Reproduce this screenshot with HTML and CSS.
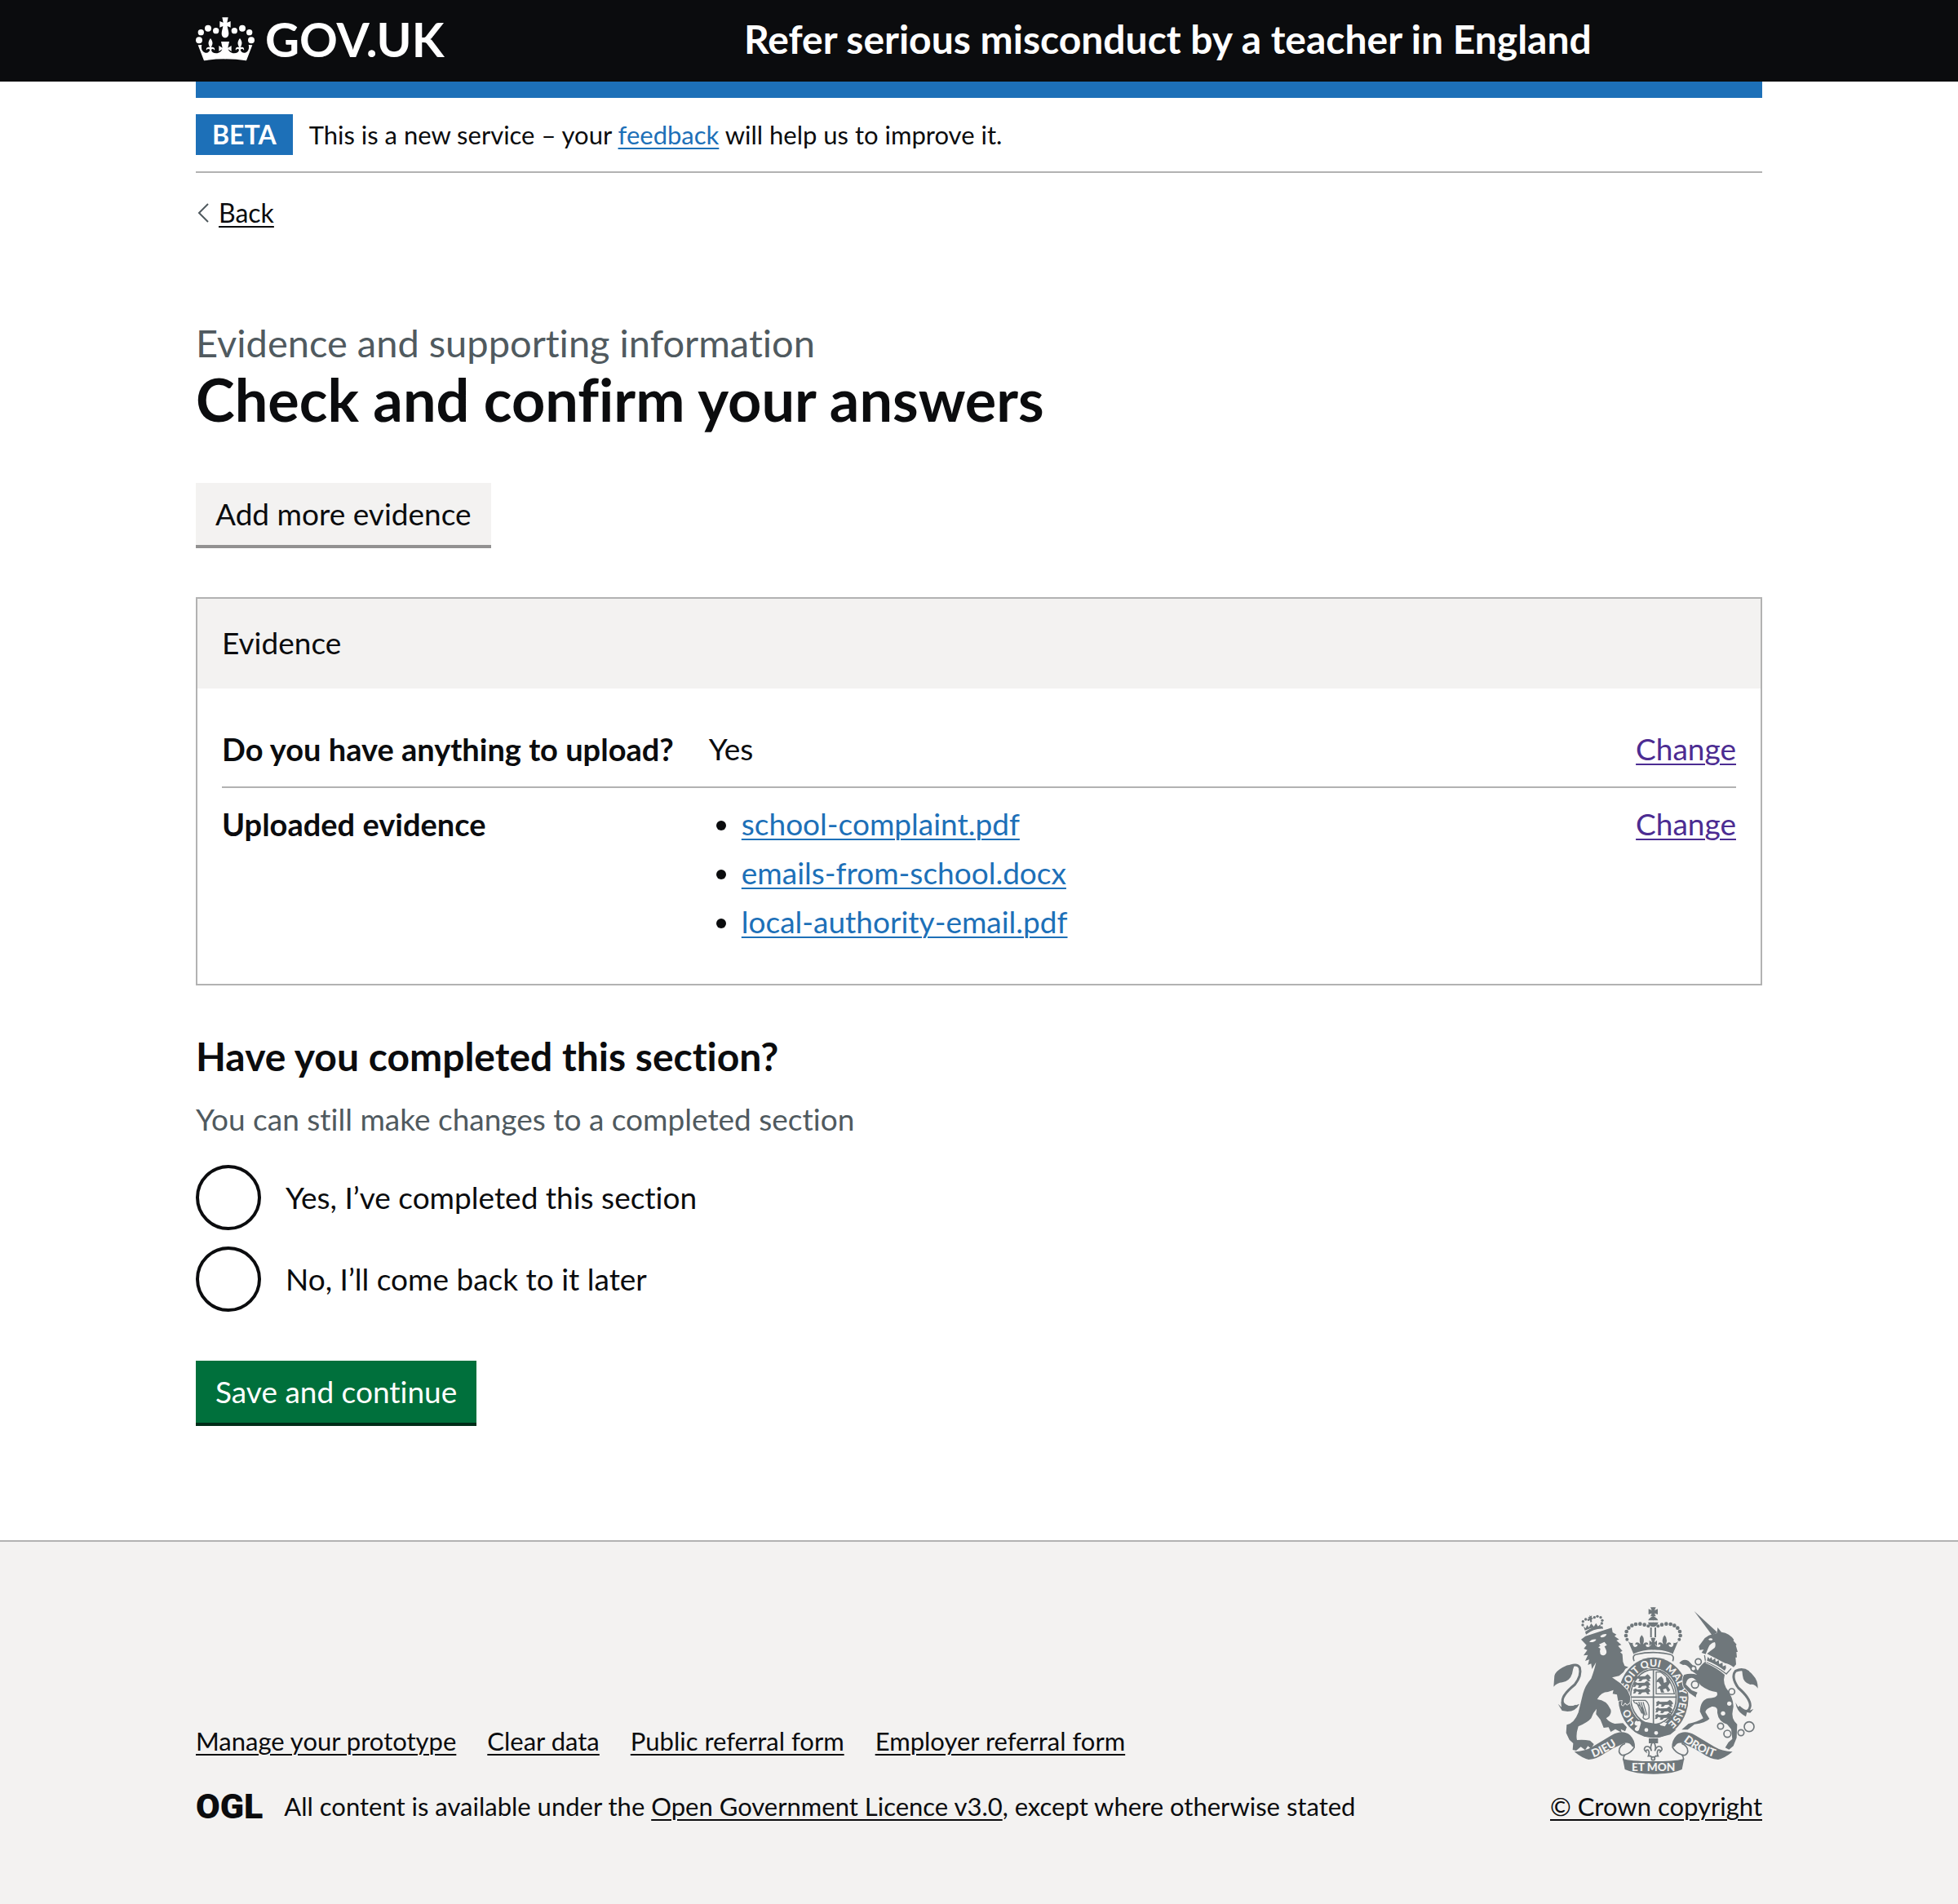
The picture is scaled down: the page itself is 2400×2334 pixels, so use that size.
FILE: index.html
```html
<!DOCTYPE html>
<html lang="en">
<head>
<meta charset="utf-8">
<meta name="viewport" content="width=device-width, initial-scale=1">
<title>Check and confirm your answers – Refer serious misconduct by a teacher in England</title>
<link rel="stylesheet" href="styles.css">
</head>
<body>
<header class="header">
  <div class="container header-inner">
    <a class="logo" href="#">
      <svg class="logo-crown" viewBox="60 62 216 162" aria-hidden="true">
        <defs>
          <g id="crown-half">
            <circle cx="72" cy="147" r="12"/><circle cx="79" cy="118" r="11"/><circle cx="105" cy="103" r="12"/><circle cx="134" cy="112" r="11"/>
            <path d="M168 63h-11l4 19-13-5v23l12-5c-1 10-5 17-5 27 0 10 6 16 13 16z"/>
            <path d="M90 222 68 165l14-1c-4 15 2 26 13 29 9 1 15-3 17-11-5-5-10-3-13 2-3-9 5-14 13-11-8-12-7-22 2-33 9 11 10 21 2 33 8-3 16 2 13 11-3-5-9-7-12-2 1 9 8 13 18 13 12 0 19-7 22-15l-12 8v-21l13 8-5-23h17v64q-44 0-78 6z"/>
          </g>
        </defs>
        <use href="#crown-half"/>
        <use href="#crown-half" transform="translate(336) scale(-1 1)"/>
      </svg>
      <span>GOV.UK</span>
    </a>
    <a class="service-name" href="#">Refer serious misconduct by a teacher in England</a>
  </div>
</header>

<div class="container">
  <div class="phase-banner">
    <strong class="tag">BETA</strong>
    <span>This is a new service – your <a class="link" href="#">feedback</a> will help us to improve it.</span>
  </div>
  <a class="back-link" href="#">
    <svg class="back-chevron" viewBox="0 0 14 24" aria-hidden="true"><path d="M13 1 2 12l11 11"/></svg>
    <span>Back</span>
  </a>

  <main class="main">
    <span class="caption">Evidence and supporting information</span>
    <h1 class="title">Check and confirm your answers</h1>
    <button class="button button-secondary" type="button">Add more evidence</button>

    <section class="card">
      <h2 class="card-title">Evidence</h2>
      <dl class="summary">
        <div class="row">
          <dt>Do you have anything to upload?</dt>
          <dd>Yes</dd>
          <dd><a class="link link-visited" href="#">Change</a></dd>
        </div>
        <div class="row">
          <dt>Uploaded evidence</dt>
          <dd>
            <ul class="files">
              <li><a class="link" href="#">school-complaint.pdf</a></li>
              <li><a class="link" href="#">emails-from-school.docx</a></li>
              <li><a class="link" href="#">local-authority-email.pdf</a></li>
            </ul>
          </dd>
          <dd><a class="link link-visited" href="#">Change</a></dd>
        </div>
      </dl>
    </section>

    <form>
      <fieldset class="fieldset" aria-describedby="section-hint">
        <legend class="legend">Have you completed this section?</legend>
        <p class="hint" id="section-hint">You can still make changes to a completed section</p>
        <div class="radios">
          <div class="radio">
            <input type="radio" name="complete" id="complete-yes" value="yes">
            <label for="complete-yes">Yes, I’ve completed this section</label>
          </div>
          <div class="radio">
            <input type="radio" name="complete" id="complete-no" value="no">
            <label for="complete-no">No, I’ll come back to it later</label>
          </div>
        </div>
      </fieldset>
      <button class="button" type="submit">Save and continue</button>
    </form>
  </main>
</div>

<footer class="footer">
  <div class="container footer-inner">
    <div class="footer-main">
      <ul class="footer-links">
        <li><a href="#">Manage your prototype</a></li>
        <li><a href="#">Clear data</a></li>
        <li><a href="#">Public referral form</a></li>
        <li><a href="#">Employer referral form</a></li>
      </ul>
      <div class="licence">
        <span class="ogl">OGL</span>
        <span>All content is available under the <a href="#">Open Government Licence v3.0</a>, except where otherwise stated</span>
      </div>
    </div>
    <div class="copyright">
      <svg class="arms" viewBox="130 89 756 615" aria-hidden="true">
        <defs>
          <path id="garter-line" d="M498 536A96 114 0 0 1 498 308A96 114 0 0 1 498 536"/>
          <path id="scroll-left" d="M277 642Q330 624 392 576"/>
          <path id="scroll-right" d="M608 582Q660 624 740 648"/>
          <g id="arms-crown-half">
            <path d="M498 90h-11l5 11-12-5v20l12-4-5 11h11zM498 122q-15 5-19 16h19zM478 145h20v17q-16-1-20-17z"/>
            <circle cx="479" cy="159" r="6"/><circle cx="465" cy="154" r="7"/><circle cx="449" cy="151" r="7"/><circle cx="433" cy="152" r="7"/><circle cx="419" cy="157" r="7"/><circle cx="407" cy="166" r="7"/><circle cx="399" cy="179" r="7"/><circle cx="397" cy="194" r="7"/><circle cx="401" cy="208" r="6"/>
            <path d="M486 164h6v36h-6zM425 262 405 214q8 10 17 6-1 15 10 16 8-1 8-8-4-4-9 0 0-12 13-8l6 6q-8-20 5-34 13 14 5 34l6-6q13-4 13 8-5-4-9 0 0 9 9 8 8-1 12-12l-8 8v-20l10 7-5-17h12v44q-43 0-73 14z"/>
          </g>
          <path id="passant" d="M422 345l8-5 7 4 26-1 9-7 7 5 6 9-7 5 5 6-9 1-6-8-13 1-7 7-9-1 4-7-9-3-5 7-8 1 3-7z"/>
        </defs>

        <use href="#arms-crown-half"/>
        <use href="#arms-crown-half" transform="translate(994) scale(-1 1)"/>
        <path class="arms-line" d="M427 288q-8-22 8-25 62-14 124 0 18 4 10 25"/>

        <!-- garter and shield -->
        <ellipse cx="498" cy="422" rx="129" ry="148"/>
        <ellipse class="arms-gap" cx="498" cy="420" rx="89" ry="106"/>
        <ellipse class="arms-line" cx="498" cy="420" rx="84" ry="101"/>
        <path class="arms-line" d="M498 318v205M412 420h172"/>
        <use href="#passant" transform="translate(4 0)"/><use href="#passant" transform="translate(2 24)"/><use href="#passant" transform="translate(2 48)"/>
        <use href="#passant" transform="translate(86 94)"/><use href="#passant" transform="translate(84 118)"/><use href="#passant" transform="translate(82 142)"/>
        <path class="arms-thin" d="M508 328h16q38 22 51 80h-67zM424 432h44q12 8 14 26v38q-14 12-22 0 10-38-32-56zM436 440l20 40M444 438l18 48M452 438l16 50M460 438l14 48"/>
        <path d="M518 350l9-6 7 9 3 15 9-4-2-16 10 2 6 16-9 14 9 14-9 8-7-14-11 4 5 12-12-1-4-13-10-1 8-9 7-2-10-14-9 2 4-9z"/>
        <text class="arms-text garter-text"><textPath href="#garter-line" startOffset="66">HO</textPath></text>
        <text class="arms-text garter-text"><textPath href="#garter-line" startOffset="194">SOIT QUI</textPath></text>
        <text class="arms-text garter-text"><textPath href="#garter-line" startOffset="374">MAL Y</textPath></text>
        <text class="arms-text garter-text"><textPath href="#garter-line" startOffset="488">PENSE</textPath></text>
        <path d="M430 505l22 10-10 30 28 18 42 7 48-12 22-18-32-2-30-18z"/>
        <path class="arms-gap" d="M522 520l14-8 12 4-8 12-16-4z"/>
        <circle class="arms-gap" cx="472" cy="541" r="7"/><circle class="arms-gap" cx="508" cy="552" r="7"/>
        <path class="arms-gap arms-outline" d="M428 510q-6 14 6 17-12 8-4 18 9 7 17-2l8-28q-4-12-14-8-8-6-13 3z"/>

        <!-- lion -->
        <path class="arms-outline-gap" d="M232 208l16-12 97-31 3 17 14 8-7 6 17 12-10 4 18 16-12 4 16 18-8 5 8 7 2 28 6 15 14 5-11 6-7 12-16 14-26 6 32 22 25 26 10 24-2 20-10 8-7-7-8 10-4-3 2-17-16 3-4-23-16-3 3-14-20 7q-25 0-40 27 35 3 50 38 5 20-17 32 12 16 32 20l30-2 14 15-6 15-16-8 4 13-24-13-17 10-8-17-18 2-12-30-16-20 2-20q-14 15-20 35-12 15-47 30-10 30-5 50 25-2 48 2l14 13-10 17-12-10-10 15-16-12-17 14-13-3 2-24-14-13-12-25 2-30q28-5 43-45l17-70q8-30 30-55 13-35 18-60l-15 25-3-20-12 5 5-20-15 5 10-22-16 2 14-20-13-5 10-13z"/>
        <path class="arms-gap" d="M262 218q8-12 26-10-6 12-26 10zM302 196q10-10 24-7-4 12-20 12zM298 226l20-9 9 12-9 5 5 10q6 12-2 20-8 6-18-2-4-10 0-20l-8-5 8-5z"/>
        <path d="M250 190l-3-10q30-22 64-20l2 9q-33-2-63 21z"/>
        <circle cx="238" cy="155" r="5"/><circle cx="239" cy="142" r="5"/><circle cx="249" cy="134" r="5"/><circle cx="259" cy="136" r="4"/><circle cx="281" cy="127" r="5"/><circle cx="292" cy="123" r="5"/><circle cx="304" cy="127" r="5"/><circle cx="310" cy="138" r="5"/><circle cx="308" cy="149" r="5"/>
        <path d="M262 119l5 4 5-3-1 8 6 3-6 4 1 9-5 2-3-9-6 1 3-7-4-5 7-1zM246 175l-5-15 8 7 5-12 7 9 8-15 10 12 8-13 7 12 10-8-2 14q-30-4-56 9z"/>
        <path class="arms-tail" d="M214 452q-30 14-49-10-10-24 44-68 26-34 18-62-9-16-34-6"/>
        <path d="M208 302q-22-6-44 9-26 14-30 31l-3 40q12-14 32-16 28-6 36-32 2-16 9-32zM226 445q-14 28-44 28l-20-3-15-25 13 12-2-20q24 28 68 8z"/>

        <!-- unicorn -->
        <path d="M648 104l85 78-19 11z"/>
        <path d="M716 190l16-6 2-20 14 17q30 4 46 28l-2 4 12 14-3 3 7 24-5 0 2 20-5 0 2 26-9 10q-18-13-32-15l-66-34q10-9 27-21 7-9 2-22-17 3-24 20l-10 24-15-5 8-12-15 2-3-14 22-30q14-12 31-15z"/>
        <path class="arms-gap" d="M700 208q10-8 16 0-6 7-16 0z"/>
        <path class="arms-thin" d="M686 266l4 26q42 16 76 43l18-20"/>
        <path d="M695 284l3-12 7 8 6-7 4 12 10-8 2 14 11-7 2 15 12-6 1 14 11-4 1 10-5 10q-28-23-65-37z"/>
        <path class="arms-outline-gap" d="M690 295q40 16 70 43-10 34 16 64 22 40 14 66-8 32 16 52l-2 50-12 30-16 13-14-7 12-20 14-12-4-36-15-18q-32-10-36-42 4-25-20-23-22 8-24 20l15 25q-15 16-55 20l-25 20h-22l25-22q32-6 54-20l-12-25q2-44 32-49 40-1 30-22-32-4-58-24-24-30-34-29-18 0-22 24l22 22 21 8-5 10-1 8-24-16-21-23q-9-28 2-44 24-8 48 0l-20-14q-18-28-32-22l-14-7q14-18 34-8l34 35q10-19 30-34z"/>
        <path class="arms-tail" d="M812 455q36 34 42-3 0-28-44-66-28-40-10-62 26-12 48 4"/>
        <path d="M824 322q24-6 42 20 16 16 16 46-12-17-28-14-26-8-28-34zM800 440q14 32 44 32l22-8-12 14-12-2-4 16-12-8q-22-14-26-44z"/>
        <g class="arms-chain">
          <circle cx="663" cy="290" r="11"/><circle cx="645" cy="315" r="9"/><circle cx="651" cy="374" r="13"/><circle cx="786" cy="400" r="11"/><circle cx="745" cy="527" r="11"/><circle cx="770" cy="555" r="13"/><circle cx="820" cy="551" r="11"/><circle cx="850" cy="529" r="18"/>
        </g>
        <circle class="arms-gap" cx="777" cy="444" r="8"/><circle class="arms-gap" cx="754" cy="480" r="8"/>

        <!-- motto scroll -->
        <path d="M481 572h34v18h-34z"/>
        <path class="arms-gap arms-outline" d="M497 584q14 14 6 34 8-22 22-15 10 10-2 18 2-8-8-6-6 10 0 22h-9l-9 11-9-11h-9q6-12 0-22-10-2-8 6-12-8-2-18 14-7 22 15-8-20 6-34z"/>
        <circle class="arms-gap arms-outline" cx="497" cy="646" r="6"/>
        <path id="scroll-end" d="M207 621Q245 620 275 602L345 560Q385 538 412 560Q432 580 430 606L420 602Q408 582 385 592Q350 606 320 626Q290 648 260 650Q236 645 207 621Z"/>
        <use href="#scroll-end" transform="translate(996) scale(-1 1)"/>
        <path class="arms-line" d="M428 604q-10 20-34 28-16 6-22-10-2-22 22-31M394 632q-8 8-6 20M568 604q10 20 34 28 16 6 22-10 2-22-22-31M602 632q8 8 6 20"/>
        <path d="M385 646q24 10 113 10t113-10l-8 40q-36 17-105 17t-105-17z"/>
        <text class="arms-text"><textPath href="#scroll-left">DIEU</textPath></text>
        <text class="arms-text" x="498" y="693" text-anchor="middle">ET MON</text>
        <text class="arms-text"><textPath href="#scroll-right">DROIT</textPath></text>
      </svg>
      <a href="#">© Crown copyright</a>
    </div>
  </div>
</footer>
</body>
</html>
```
FILE: styles.css
```css
* { box-sizing: border-box; }

body {
  margin: 0;
  min-height: 100vh;
  display: flex;
  flex-direction: column;
  font-family: Lato, "Liberation Sans", sans-serif;
  font-size: 37px;
  font-variant-ligatures: none;
  line-height: 48px;
  color: #0b0c0e;
  background: #fff;
}

h1, h2, p, ul, dl, dd, fieldset { margin: 0; padding: 0; }

a {
  color: inherit;
  text-decoration-thickness: 2px;
  text-underline-offset: 4px;
}

.container {
  width: 80%;
  margin: 0 auto;
}

.link { color: #1d70b8; }
.link-visited { color: #4c2c92; }

/* Header */
.header {
  color: #fff;
  background: #0b0c0e;
}

.header-inner {
  display: flex;
  align-items: center;
  padding-bottom: 4px;
}

.header a { text-decoration: none; }

.logo {
  flex: 0 0 35%;
  display: flex;
  align-items: center;
  gap: 13px;
  font-size: 58px;
  font-weight: 700;
  line-height: 96px;
}

.logo-crown {
  width: 72px;
  height: 54px;
  fill: currentColor;
}

.service-name {
  font-size: 48px;
  font-weight: 700;
  line-height: 60px;
}

/* Phase banner */
.phase-banner {
  display: flex;
  align-items: center;
  gap: 20px;
  padding: 20px 0;
  border-top: 20px solid #1d70b8;
  border-bottom: 2px solid #b2b2b2;
  font-size: 31px;
  line-height: 50px;
}

.tag {
  padding: 0 20px;
  font-size: 32px;
  color: #fff;
  background: #1d70b8;
}

.back-link {
  display: flex;
  align-items: center;
  gap: 12px;
  width: fit-content;
  margin-top: 30px;
  padding-left: 2px;
  font-size: 32px;
  line-height: 38px;
  text-decoration: none;
}

.back-link span {
  text-decoration: underline 2px;
}

.back-chevron {
  width: 14px;
  height: 24px;
  fill: none;
  stroke: #505a5f;
  stroke-width: 2;
}

/* Main content */
.main { padding: 110px 0 140px; }

.caption {
  display: block;
  font-size: 47px;
  line-height: 60px;
  color: #505a5f;
}

.title {
  font-size: 72px;
  line-height: 78px;
}

.button {
  display: block;
  padding: 0 24px;
  border: 0;
  border-bottom: 4px solid #002d18;
  font: inherit;
  line-height: 76px;
  color: #fff;
  background: #00703c;
}

.button-secondary {
  margin: 64px 0 60px;
  border-color: #929191;
  color: #0b0c0e;
  background: #f3f2f1;
}

.card {
  margin-bottom: 60px;
  border: 2px solid #b2b2b2;
}

.card-title {
  padding: 30px 30px 32px;
  font-size: 37px;
  font-weight: 400;
  background: #f3f2f1;
}

.summary { padding: 30px; }

.row {
  display: grid;
  grid-template-columns: 30% 1fr auto;
  column-gap: 40px;
  padding: 20px 0 22px;
}

.row + .row { border-top: 2px solid #b2b2b2; }

.row dt {
  font-size: 38px;
  font-weight: 700;
}

.files { padding-left: 40px; }
.files li + li { margin-top: 12px; }

.fieldset { border: 0; min-width: 0; }

.legend {
  padding: 0;
  margin-bottom: 26px;
  font-size: 48px;
  font-weight: 700;
  line-height: 54px;
}

.hint {
  margin-bottom: 32px;
  color: #505a5f;
}

.radios {
  display: grid;
  gap: 20px;
  margin-bottom: 60px;
}

.radio {
  display: flex;
  align-items: center;
  gap: 30px;
}

.radio input {
  appearance: none;
  width: 80px;
  height: 80px;
  margin: 0;
  border: 4px solid #0b0c0e;
  border-radius: 50%;
  background: #fff;
}

.radio input:checked {
  background: radial-gradient(#0b0c0e 20px, #fff 21px);
}

/* Footer */
.footer {
  flex: 1;
  padding: 80px 0 100px;
  border-top: 2px solid #b2b2b2;
  font-size: 31px;
  line-height: 40px;
  background: #f3f2f1;
}

.footer-inner {
  display: flex;
  align-items: flex-end;
  justify-content: space-between;
}

.footer-main {
  display: grid;
  gap: 40px;
}

.footer-links {
  display: flex;
  gap: 38px;
  list-style: none;
}

.licence {
  display: flex;
  align-items: center;
  gap: 26px;
}

.ogl {
  font-family: Roboto, sans-serif;
  font-size: 43px;
  font-weight: 900;
}

.copyright {
  display: flex;
  flex-direction: column;
  align-items: center;
  gap: 19px;
}

.arms {
  width: 252px;
  height: 205px;
  fill: #6f777b;
}

.arms-line { fill: none; stroke: #6f777b; stroke-width: 5; }
.arms-thin { fill: none; stroke: #6f777b; stroke-width: 4; }
.arms-tail { fill: none; stroke: #6f777b; stroke-width: 9; }
.arms-gap { fill: #f3f2f1; }
.arms-outline { stroke: #6f777b; stroke-width: 5; }
.arms-outline-gap { stroke: #f3f2f1; stroke-width: 5; paint-order: stroke; }
.arms-chain { fill: #f3f2f1; stroke: #6f777b; stroke-width: 5; }

.arms-text {
  font-size: 41px;
  font-weight: 900;
  fill: #f3f2f1;
}

.garter-text { font-size: 37px; }
```
